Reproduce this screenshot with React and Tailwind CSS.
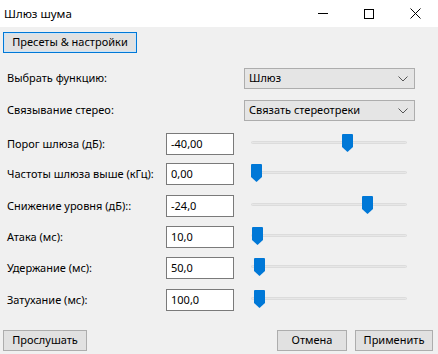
import { useState } from 'react';

const rows = [
  { label: 'Порог шлюза (дБ):', value: '-40,00', pos: 96, gap: 'mt-[12px]' },
  { label: 'Частоты шлюза выше (кГц):', value: '0,00', pos: 5, gap: 'mt-[8px]' },
  { label: 'Снижение уровня (дБ)::', value: '-24,0', pos: 116, gap: 'mt-[10px]' },
  { label: 'Атака (мс):', value: '10,0', pos: 6, gap: 'mt-[9px]' },
  { label: 'Удержание (мс):', value: '50,0', pos: 8, gap: 'mt-[9px]' },
  { label: 'Затухание (мс):', value: '100,0', pos: 8, gap: 'mt-[10px]' },
];

const font = { fontFamily: '"Noto Sans", "Segoe UI", sans-serif' };

function Chevron() {
  return (
    <svg width="10" height="6" viewBox="0 0 10 6" fill="none" stroke="#555" strokeWidth="1">
      <polyline points="0.5 0.5 5 5 9.5 0.5" />
    </svg>
  );
}

function Select({ value }) {
  return (
    <div className="ml-auto mr-[23px] flex h-[21px] w-[171px] items-center justify-between border border-[#adadad] bg-[#e5e5e5] pl-[4px] pr-[6px] text-black">
      <span>{value}</span>
      <Chevron />
    </div>
  );
}

function Slider({ pos }) {
  return (
    <div className="relative ml-[17px] h-[22px] w-[156px]">
      <div className="absolute left-0 right-0 top-[8px] h-[3px] rounded-sm border border-[#dcdcdc] bg-[#e7e7e7]" />
      <svg
        className="absolute top-[1px]"
        style={{ left: pos - 5 }}
        width="11"
        height="18"
        viewBox="0 0 11 18"
      >
        <path d="M1 0 H10 A1 1 0 0 1 11 1 V13 L5.5 18 L0 13 V1 A1 1 0 0 1 1 0 Z" fill="#0078d7" />
      </svg>
    </div>
  );
}

export default function App() {
  const [vals] = useState(rows);
  return (
    <div className="flex h-[354px] w-[438px] flex-col bg-[#f0f0f0] text-[11px] text-black" style={font}>
      <div className="flex h-[27px] items-center bg-white pl-[4px]">
        <span className="text-[11.5px]">Шлюз шума</span>
        <div className="ml-auto flex h-full items-center">
          <div className="flex w-[46px] justify-center">
            <div className="h-px w-[10px] bg-black" />
          </div>
          <div className="flex w-[46px] justify-center">
            <div className="h-[10px] w-[10px] border border-black" />
          </div>
          <div className="flex w-[46px] justify-center">
            <svg width="11" height="11" viewBox="0 0 11 11" stroke="#000" strokeWidth="1">
              <line x1="0.5" y1="0.5" x2="10.5" y2="10.5" />
              <line x1="10.5" y1="0.5" x2="0.5" y2="10.5" />
            </svg>
          </div>
        </div>
      </div>

      <div className="px-[3px] pt-[5px]">
        <button className="h-[21px] w-[134px] border border-[#0078d7] bg-[#e1e1e1] shadow-[inset_0_0_0_1px_#cce4f7]">
          Пресеты &amp; настройки
        </button>
      </div>

      <div className="mt-[15px] flex flex-col pl-[7px]">
        <div className="flex h-[21px] items-center">
          <span className="whitespace-nowrap">Выбрать функцию:</span>
          <Select value="Шлюз" />
        </div>
        <div className="mt-[11px] flex h-[21px] items-center">
          <span className="whitespace-nowrap">Связывание стерео:</span>
          <Select value="Связать стереотреки" />
        </div>
        {vals.map((r) => (
          <div key={r.label} className={`${r.gap} flex h-[22px] items-center`}>
            <span className="w-[159px] shrink-0 whitespace-nowrap">{r.label}</span>
            <div className="flex h-[22px] w-[68px] shrink-0 items-center border border-[#7a7a7a] bg-white pl-[4px]">
              {r.value}
            </div>
            <Slider pos={r.pos} />
          </div>
        ))}
      </div>

      <div className="mt-auto flex items-center px-[3px] pb-[3px]">
        <button className="h-[21px] w-[84px] border border-[#adadad] bg-[#e1e1e1]">Прослушать</button>
        <button className="ml-auto h-[21px] w-[70px] border border-[#adadad] bg-[#e1e1e1]">Отмена</button>
        <button className="ml-[8px] mr-[2px] h-[21px] w-[78px] border border-[#adadad] bg-[#e1e1e1]">
          Применить
        </button>
      </div>
    </div>
  );
}
